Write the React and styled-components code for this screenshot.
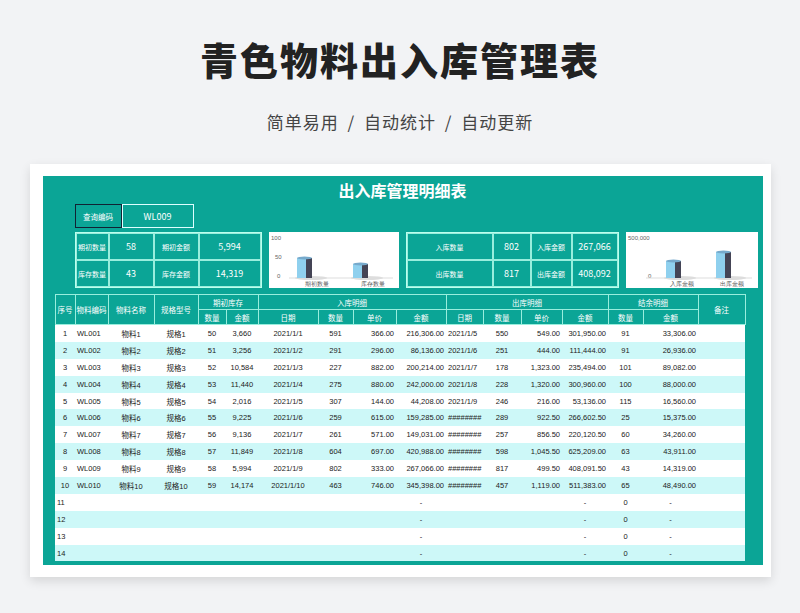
import React from "react";
import styled, { createGlobalStyle } from "styled-components";

const Global = createGlobalStyle`
  body { margin: 0; background: #f2f3f5; font-family: "Noto Sans CJK SC", "Noto Sans", sans-serif; }
`;

const teal = "#0ba596";

const rows = [
  [1, "WL001", "物料1", "规格1", 50, "3,660", "2021/1/1", 591, "366.00", "216,306.00", "2021/1/5", 550, "549.00", "301,950.00", 91, "33,306.00"],
  [2, "WL002", "物料2", "规格2", 51, "3,256", "2021/1/2", 291, "296.00", "86,136.00", "2021/1/6", 251, "444.00", "111,444.00", 91, "26,936.00"],
  [3, "WL003", "物料3", "规格3", 52, "10,584", "2021/1/3", 227, "882.00", "200,214.00", "2021/1/7", 178, "1,323.00", "235,494.00", 101, "89,082.00"],
  [4, "WL004", "物料4", "规格4", 53, "11,440", "2021/1/4", 275, "880.00", "242,000.00", "2021/1/8", 228, "1,320.00", "300,960.00", 100, "88,000.00"],
  [5, "WL005", "物料5", "规格5", 54, "2,016", "2021/1/5", 307, "144.00", "44,208.00", "2021/1/9", 246, "216.00", "53,136.00", 115, "16,560.00"],
  [6, "WL006", "物料6", "规格6", 55, "9,225", "2021/1/6", 259, "615.00", "159,285.00", "########", 289, "922.50", "266,602.50", 25, "15,375.00"],
  [7, "WL007", "物料7", "规格7", 56, "9,136", "2021/1/7", 261, "571.00", "149,031.00", "########", 257, "856.50", "220,120.50", 60, "34,260.00"],
  [8, "WL008", "物料8", "规格8", 57, "11,849", "2021/1/8", 604, "697.00", "420,988.00", "########", 598, "1,045.50", "625,209.00", 63, "43,911.00"],
  [9, "WL009", "物料9", "规格9", 58, "5,994", "2021/1/9", 802, "333.00", "267,066.00", "########", 817, "499.50", "408,091.50", 43, "14,319.00"],
  [10, "WL010", "物料10", "规格10", 59, "14,174", "2021/1/10", 463, "746.00", "345,398.00", "########", 457, "1,119.00", "511,383.00", 65, "48,490.00"],
];
const widths = [20, 33, 46, 44, 28, 32, 60, 35, 43, 50, 37, 38, 41, 46, 35, 55, 47];
const align = ["c","l","c","c","c","c","c","c","r","r","l","c","r","r","c","r","c"];

const Page = styled.div`
  width: 800px; height: 613px; overflow: hidden;
  display: flex; flex-direction: column; align-items: center;
`;
const Title = styled.h1`
  margin: 33px 0 0; font-size: 38px; font-weight: 900; color: #222; letter-spacing: 2px; line-height: 52px;
`;
const Sub = styled.div`
  margin-top: 24px; font-size: 17px; color: #444; letter-spacing: 1px; word-spacing: 4px;
`;
const Card = styled.div`
  margin-top: 30px; width: 741px; padding: 12px 8px 12px 13px; box-sizing: border-box;
  background: #fff; box-shadow: 0 4px 10px rgba(0,0,0,0.12);
`;
const Panel = styled.div`
  background: ${teal}; padding: 0 12px 4px 12px; color: #fff;
`;
const PanelTitle = styled.div`
  text-align: center; font-size: 16px; font-weight: 700; height: 28px; line-height: 28px;
`;
const Query = styled.div`
  display: flex; margin-left: 20px; height: 24px; font-size: 8px;
`;
const QCell = styled.div`
  width: ${p => p.w}px; border: 1px solid ${p => p.dark ? "#123" : "#dff"};
  font-size: ${p => p.big ? 9 : 7.5}px;
  display: flex; align-items: center; justify-content: center; box-sizing: border-box;
`;
const Stats = styled.div`
  display: flex; margin: 4px 0 0 20px; gap: 7px; height: 56px;
`;
const Grid = styled.div`
  display: grid; grid-template-columns: ${p => p.cols}; grid-template-rows: 1fr 1fr;
  border: 1px solid #bfe; font-size: 7px; white-space: nowrap;
  & > div { border: 1px solid #9ed; display: flex; align-items: center; justify-content: center; }
`;
const Num = styled.div` font-size: 9px; `;
const Chart = styled.div`
  width: ${p => p.w}px; background: #fff; position: relative;
`;
const Table = styled.table`
  border-collapse: collapse; table-layout: fixed; width: 690px; margin-top: 6px;
  font-size: 7.5px; font-family: "Liberation Sans", "Noto Sans CJK SC", sans-serif;
  th { border: 1px solid #9ed; font-weight: 400; color: #fff; height: 14px; padding: 0; }
  td { height: 16.9px; padding: 0 2px; color: #222; white-space: nowrap; overflow: hidden; }
  tbody tr:nth-child(odd) { background: #fff; }
  tbody tr:nth-child(even) { background: #cdf8f8; }
  td.l { text-align: left; } td.c { text-align: center; } td.r { text-align: right; }
`;

const Bar = ({ x, h }) => (
  <g>
    <ellipse cx={x + 14} cy={46} rx={16} ry={2} fill="#ddd" />
    <rect x={x} y={46 - h} width={9} height={h} fill="#8fd0ee" />
    <rect x={x + 9} y={46 - h} width={6} height={h} fill="#445" />
    <ellipse cx={x + 7.5} cy={46 - h} rx={7.5} ry={1.5} fill="#7ac" />
  </g>
);

const MiniChart = ({ w, top, mid, labels, bars }) => (
  <Chart w={w}>
    <svg width={w} height={56} style={{ fontSize: 6, fontFamily: "Liberation Sans" }}>
      <text x={2} y={8} fill="#666">{top}</text>
      {mid && <text x={6} y={27} fill="#666">{mid}</text>}
      <text x={mid ? 8 : 22} y={46} fill="#666">0</text>
      <line x1={20} y1={46} x2={w - 6} y2={46} stroke="#ddd" />
      {bars.map((b, i) => <Bar key={i} x={b[0]} h={b[1]} />)}
      {labels.map((l, i) => (
        <text key={i} x={l[0]} y={54} fill="#555" textAnchor="middle">{l[1]}</text>
      ))}
    </svg>
  </Chart>
);

export default function App() {
  const empty = [11, 12, 13, 14];
  return (
    <Page>
      <Global />
      <Title>青色物料出入库管理表</Title>
      <Sub>简单易用 / 自动统计 / 自动更新</Sub>
      <Card>
        <Panel>
          <PanelTitle>出入库管理明细表</PanelTitle>
          <Query>
            <QCell w={47} dark>查询编码</QCell>
            <QCell w={72} big>WL009</QCell>
          </Query>
          <Stats>
            <Grid cols="33px 45px 45px 62px">
              <div>期初数量</div><Num>58</Num><div>期初金额</div><Num>5,994</Num>
              <div>库存数量</div><Num>43</Num><div>库存金额</div><Num>14,319</Num>
            </Grid>
            <MiniChart w={130} top="100" mid="50" bars={[[28, 20], [84, 14]]}
              labels={[[48, "期初数量"], [104, "库存数量"]]} />
            <Grid cols="86px 38px 41px 46px">
              <div>入库数量</div><Num>802</Num><div>入库金额</div><Num>267,066</Num>
              <div>出库数量</div><Num>817</Num><div>出库金额</div><Num>408,092</Num>
            </Grid>
            <MiniChart w={132} top="500,000" bars={[[40, 17], [90, 26]]}
              labels={[[56, "入库金额"], [106, "出库金额"]]} />
          </Stats>
          <Table>
            <colgroup>{widths.map((w, i) => <col key={i} style={{ width: w }} />)}</colgroup>
            <thead>
              <tr>
                <th rowSpan={2}>序号</th><th rowSpan={2}>物料编码</th><th rowSpan={2}>物料名称</th>
                <th rowSpan={2}>规格型号</th><th colSpan={2}>期初库存</th><th colSpan={4}>入库明细</th>
                <th colSpan={4}>出库明细</th><th colSpan={2}>结余明细</th><th rowSpan={2}>备注</th>
              </tr>
              <tr>
                {["数量","金额","日期","数量","单价","金额","日期","数量","单价","金额","数量","金额"].map((t, i) => <th key={i}>{t}</th>)}
              </tr>
            </thead>
            <tbody>
              {rows.map(r => (
                <tr key={r[0]}>
                  {r.map((v, i) => <td key={i} className={align[i]}>{v}</td>)}
                  <td />
                </tr>
              ))}
              {empty.map(n => (
                <tr key={n}>
                  <td className="l">{n}</td>
                  <td /><td /><td /><td /><td /><td /><td /><td />
                  <td className="c">-</td><td /><td /><td />
                  <td className="c">-</td><td className="c">0</td><td className="c">-</td><td />
                </tr>
              ))}
            </tbody>
          </Table>
        </Panel>
      </Card>
    </Page>
  );
}
